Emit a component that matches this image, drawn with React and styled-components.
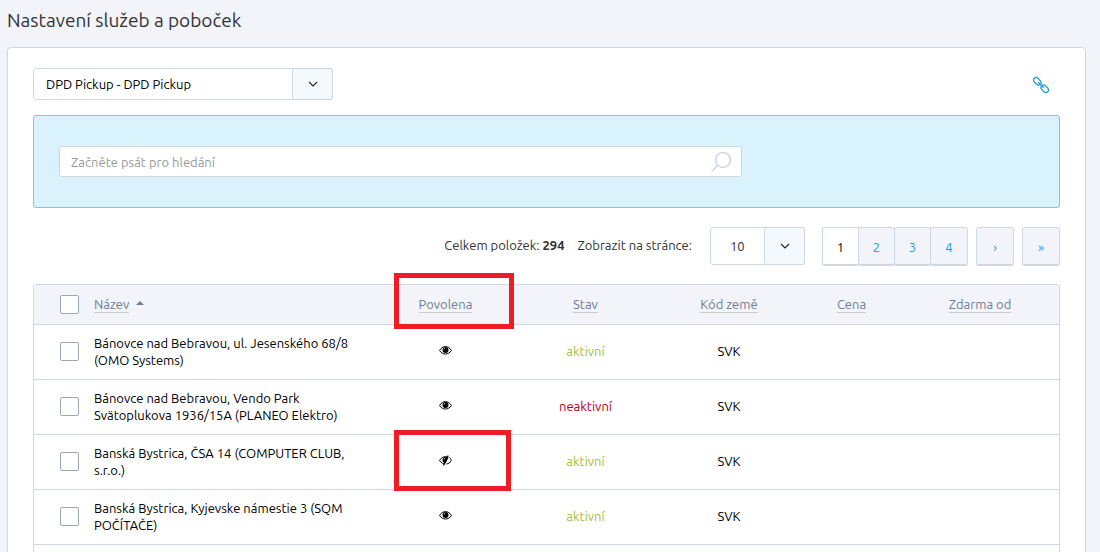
import React, { useState } from 'react';
import styled, { createGlobalStyle, ThemeProvider } from 'styled-components';

const theme = {
  font: "Ubuntu, 'Noto Sans', sans-serif",
  colors: {
    page: '#f3f4f9',
    line: '#d0d7e0',
    text: '#000000',
    label: '#333333',
    head: '#707d95',
    link: '#1a98d5',
    arrow: '#f3f9fd',
    panel: '#d9f2fc',
    panelLine: '#85c5d6',
    green: '#a3bf3b',
    red: '#bb0016',
    mark: '#ee1c25',
  },
};

const GlobalStyle = createGlobalStyle`
  * {
    box-sizing: border-box;
  }

  body {
    margin: 0;
    background-color: ${theme.colors.page};
    color: ${theme.colors.text};
    font-family: ${theme.font};
    font-size: 13px;
    line-height: 17px;
  }

  button,
  input,
  select {
    font: inherit;
    color: inherit;
  }
`;

const Page = styled.main`
  height: 100vh;
  overflow: hidden;
  padding: 8px 14px 0 7px;
`;

const Title = styled.h1`
  margin: 0 0 15px;
  color: ${({ theme }) => theme.colors.label};
  font-size: 19px;
  font-weight: 400;
  line-height: 24px;
`;

const Card = styled.section`
  padding: 20px 25px;
  border: 1px solid ${({ theme }) => theme.colors.line};
  border-radius: 4px;
  background-color: white;
`;

const TopBar = styled.div`
  display: flex;
  align-items: center;
  justify-content: space-between;
  margin-bottom: 15px;
`;

const IconLink = styled.a`
  display: flex;
  padding-top: 2px;
  margin-right: 10px;
  color: ${({ theme }) => theme.colors.link};
`;

const SelectWrapper = styled.div`
  display: grid;
  grid-template-columns: 1fr 41px;
  width: ${({ $width }) => $width};
  height: ${({ $height }) => $height};

  select {
    grid-area: 1 / 1 / 2 / 3;
    appearance: none;
    padding: 0 52px 0 12px;
    border: 1px solid ${({ theme }) => theme.colors.line};
    border-radius: 3px;
    background-color: white;
    padding-left: ${({ $compact }) => $compact && '19px'};
    padding-right: ${({ $compact }) => $compact && '41px'};
  }

  span {
    grid-area: 1 / 2 / 2 / 3;
    display: flex;
    align-items: center;
    justify-content: center;
    border: 1px solid ${({ theme }) => theme.colors.line};
    border-radius: 3px;
    background-color: ${({ theme }) => theme.colors.arrow};
    pointer-events: none;
  }
`;

const SearchPanel = styled.form`
  margin-bottom: 19px;
  padding: 30px 25px;
  border: 1px solid ${({ theme }) => theme.colors.panelLine};
  border-radius: 3px;
  background-color: ${({ theme }) => theme.colors.panel};
`;

const SearchBox = styled.label`
  display: flex;
  align-items: center;
  width: 70%;
  height: 31px;
  padding: 0 9px 0 11px;
  border: 1px solid ${({ theme }) => theme.colors.line};
  border-radius: 3px;
  background-color: white;
  color: ${({ theme }) => theme.colors.line};

  input {
    flex: 1;
    min-width: 0;
    padding: 2px 0 0;
    border: 0;
    outline: 0;
    background: none;
    color: ${({ theme }) => theme.colors.text};
  }

  input::placeholder {
    color: #999999;
  }
`;

const Toolbar = styled.div`
  display: flex;
  align-items: flex-start;
  justify-content: flex-end;
  margin-bottom: 18px;
  color: ${({ theme }) => theme.colors.label};
`;

const ToolbarText = styled.div`
  margin-right: ${({ $gap }) => $gap};
  line-height: 36px;
`;

const Pager = styled.nav`
  display: flex;
  gap: 8px;
  margin-left: 17px;
`;

const PageButton = styled.button`
  width: 38px;
  height: 39px;
  padding: 2px 0 0;
  border: 1px solid ${({ theme }) => theme.colors.line};
  border-bottom-width: 2px;
  border-radius: 3px;
  background-color: ${({ $active, theme }) =>
    $active ? 'white' : theme.colors.page};
  color: ${({ $active, theme }) =>
    $active ? theme.colors.text : theme.colors.link};
  cursor: pointer;
`;

const PageGroup = styled.div`
  display: flex;

  ${PageButton}:not(:last-child) {
    width: 37px;
    margin-right: -1px;
  }
`;

const TableBox = styled.div`
  padding-bottom: 40px;
  border: 1px solid ${({ theme }) => theme.colors.line};
  border-radius: 3px;
`;

const Table = styled.table`
  width: 100%;
  table-layout: fixed;
  border-spacing: 0;
`;

const Col = styled.col`
  width: ${({ $width }) => $width};
`;

const HeadCell = styled.th`
  position: relative;
  height: 40px;
  padding: 0 8px;
  border-bottom: 1px solid ${({ theme }) => theme.colors.line};
  background-color: ${({ theme }) => theme.colors.page};
  color: ${({ theme }) => theme.colors.head};
  font-weight: 400;
  text-align: ${({ $left }) => ($left ? 'left' : 'center')};
`;

const SortLink = styled.a`
  display: inline-block;
  border-bottom: 1px solid #cccccc;
  color: inherit;
  line-height: 15px;
  text-decoration: none;
`;

const SortArrow = styled.svg`
  margin-left: 7px;
  vertical-align: 4px;
`;

const Cell = styled.td`
  position: relative;
  height: 55px;
  padding: 9px 8px 11px;
  border-bottom: 1px solid ${({ theme }) => theme.colors.line};
  text-align: center;
`;

const NameCell = styled(Cell)`
  padding: 10px 8px;
  text-align: left;
`;

const CheckCell = styled(Cell)`
  padding: 0 6px 1px 26px;
`;

const CheckHead = styled(HeadCell)`
  padding: 0 6px 0 26px;
`;

const Checkbox = styled.input`
  display: block;
  appearance: none;
  width: 19px;
  height: 19px;
  margin: 0;
  border: 1px solid #9ea6b3;
  border-radius: 2px;
  background-color: white;

  &:checked {
    background-color: ${({ theme }) => theme.colors.link};
  }
`;

const EyeButton = styled.button`
  display: inline-flex;
  padding: 0;
  border: 0;
  background: none;
  cursor: pointer;
`;

const Status = styled.span`
  color: ${({ $active, theme }) =>
    $active ? theme.colors.green : theme.colors.red};
`;

const Highlight = styled.div`
  position: absolute;
  z-index: 1;
  inset: ${({ $inset }) => $inset};
  border: 5px solid ${({ theme }) => theme.colors.mark};
  pointer-events: none;
`;

const Chevron = () => (
  <svg width='10' height='6' viewBox='0 0 10 6' fill='none'>
    <path d='M1 1 L5 5 L9 1' stroke='#222' strokeWidth='1.1' />
  </svg>
);

const ChainIcon = () => (
  <svg width='18' height='18' viewBox='0 0 18 18' fill='none'>
    <g
      transform='rotate(45 9 9)'
      stroke='currentColor'
      strokeWidth='1.2'
      strokeLinecap='round'
    >
      <rect x='-0.5' y='6.4' width='8.5' height='5.2' rx='2.6' />
      <rect x='10' y='6.4' width='8.5' height='5.2' rx='2.6' />
      <path d='M5.5 9 H12.5' />
    </g>
  </svg>
);

const SearchIcon = () => (
  <svg width='22' height='22' viewBox='0 0 22 22' fill='none'>
    <g stroke='currentColor' strokeWidth='1.6' strokeLinecap='round'>
      <circle cx='13' cy='9' r='7.5' />
      <path d='M7.6 14.4 L2 20' />
    </g>
  </svg>
);

const EyeIcon = ({ isOff }) => (
  <svg width='13' height='11' viewBox='0 0 13 11' fill='none'>
    <path
      d='M0.6 5.5 C3.4 0.3 9.6 0.3 12.4 5.5 C9.6 10.2 3.4 10.2 0.6 5.5 Z'
      stroke='#000'
      strokeWidth='1'
    />
    <circle cx='6.5' cy='4.9' r='3' fill='#000' />
    <path d='M4.9 4.6 Q5 3.4 6.2 3.2' stroke='#fff' strokeWidth='0.7' />
    {isOff && (
      <>
        <path d='M10.3 0.6 L5.7 10.8 L13 10 L13 2 Z' fill='#fff' />
        <path
          d='M10.3 2.4 Q11.7 3.6 12.4 5.5 Q10.6 8.7 7.6 9.1'
          stroke='#000'
          strokeWidth='1'
        />
        <path d='M9.2 0.5 L4.4 10.5' stroke='#000' strokeWidth='1.1' />
      </>
    )}
  </svg>
);

const COLUMNS = ['Povolena', 'Stav', 'Kód země', 'Cena', 'Zdarma od'];

const BRANCHES = [
  {
    id: 1,
    name: 'Bánovce nad Bebravou, ul. Jesenského 68/8 (OMO Systems)',
    isAllowed: true,
    isActive: true,
    country: 'SVK',
  },
  {
    id: 2,
    name: 'Bánovce nad Bebravou, Vendo Park Svätoplukova 1936/15A (PLANEO Elektro)',
    isAllowed: true,
    isActive: false,
    country: 'SVK',
  },
  {
    id: 3,
    name: 'Banská Bystrica, ČSA 14 (COMPUTER CLUB, s.r.o.)',
    isAllowed: false,
    isActive: true,
    country: 'SVK',
    isMarked: true,
  },
  {
    id: 4,
    name: 'Banská Bystrica, Kyjevske námestie 3 (SQM POČÍTAČE)',
    isAllowed: true,
    isActive: true,
    country: 'SVK',
  },
];

const BranchRow = ({ branch, onToggle }) => {
  const { name, isAllowed, isActive, country, isMarked } = branch;

  return (
    <tr>
      <CheckCell>
        <Checkbox type='checkbox' aria-label={name} />
      </CheckCell>
      <NameCell>{name}</NameCell>
      <Cell>
        <EyeButton type='button' aria-label='Povolena' onClick={onToggle}>
          <EyeIcon isOff={!isAllowed} />
        </EyeButton>
        {isMarked && <Highlight $inset='-5px 4px -2px 18px' />}
      </Cell>
      <Cell>
        <Status $active={isActive}>{isActive ? 'aktivní' : 'neaktivní'}</Status>
      </Cell>
      <Cell>{country}</Cell>
      <Cell />
      <Cell />
    </tr>
  );
};

const App = () => {
  const [branches, setBranches] = useState(BRANCHES);
  const [page, setPage] = useState(1);
  const [query, setQuery] = useState('');

  const toggleBranch = (id) =>
    setBranches(
      branches.map((branch) =>
        branch.id === id ? { ...branch, isAllowed: !branch.isAllowed } : branch
      )
    );

  return (
    <ThemeProvider theme={theme}>
      <GlobalStyle />
      <Page>
        <Title>Nastavení služeb a poboček</Title>
        <Card>
          <TopBar>
            <SelectWrapper $width='300px' $height='32px'>
              <select aria-label='Služba'>
                <option>DPD Pickup - DPD Pickup</option>
              </select>
              <span>
                <Chevron />
              </span>
            </SelectWrapper>
            <IconLink href='#odkaz' aria-label='Odkaz'>
              <ChainIcon />
            </IconLink>
          </TopBar>
          <SearchPanel onSubmit={(e) => e.preventDefault()}>
            <SearchBox>
              <input
                type='text'
                aria-label='Hledání'
                placeholder='Začněte psát pro hledání'
                value={query}
                onChange={(e) => setQuery(e.target.value)}
              />
              <SearchIcon />
            </SearchBox>
          </SearchPanel>
          <Toolbar>
            <ToolbarText $gap='13px'>
              Celkem položek: <b>294</b>
            </ToolbarText>
            <ToolbarText $gap='18px' as='label' htmlFor='page-size'>
              Zobrazit na stránce:
            </ToolbarText>
            <SelectWrapper $width='95px' $height='38px' $compact>
              <select id='page-size'>
                <option>10</option>
              </select>
              <span>
                <Chevron />
              </span>
            </SelectWrapper>
            <Pager>
              <PageGroup>
                {[1, 2, 3, 4].map((number) => (
                  <PageButton
                    key={number}
                    type='button'
                    $active={number === page}
                    onClick={() => setPage(number)}
                  >
                    {number}
                  </PageButton>
                ))}
              </PageGroup>
              <PageButton type='button' onClick={() => setPage(page + 1)}>
                ›
              </PageButton>
              <PageButton type='button' onClick={() => setPage(4)}>
                »
              </PageButton>
            </Pager>
          </Toolbar>
          <TableBox>
            <Table>
              <colgroup>
                <Col $width='52px' />
                <Col />
                <Col $width='139px' />
                <Col $width='141px' />
                <Col $width='146px' />
                <Col $width='99px' />
                <Col $width='158px' />
              </colgroup>
              <thead>
                <tr>
                  <CheckHead>
                    <Checkbox type='checkbox' aria-label='Vybrat vše' />
                  </CheckHead>
                  <HeadCell $left>
                    <SortLink href='#nazev'>Název</SortLink>
                    <SortArrow width='8' height='4' viewBox='0 0 8 4'>
                      <path d='M0 4 L4 0 L8 4 Z' fill='#707d95' />
                    </SortArrow>
                  </HeadCell>
                  {COLUMNS.map((title) => (
                    <HeadCell key={title}>
                      <SortLink href='#razeni'>{title}</SortLink>
                      {title === 'Povolena' && (
                        <Highlight $inset='-12px 1px -5px 18px' />
                      )}
                    </HeadCell>
                  ))}
                </tr>
              </thead>
              <tbody>
                {branches.map((branch) => (
                  <BranchRow
                    key={branch.id}
                    branch={branch}
                    onToggle={() => toggleBranch(branch.id)}
                  />
                ))}
              </tbody>
            </Table>
          </TableBox>
        </Card>
      </Page>
    </ThemeProvider>
  );
};

export default App;
